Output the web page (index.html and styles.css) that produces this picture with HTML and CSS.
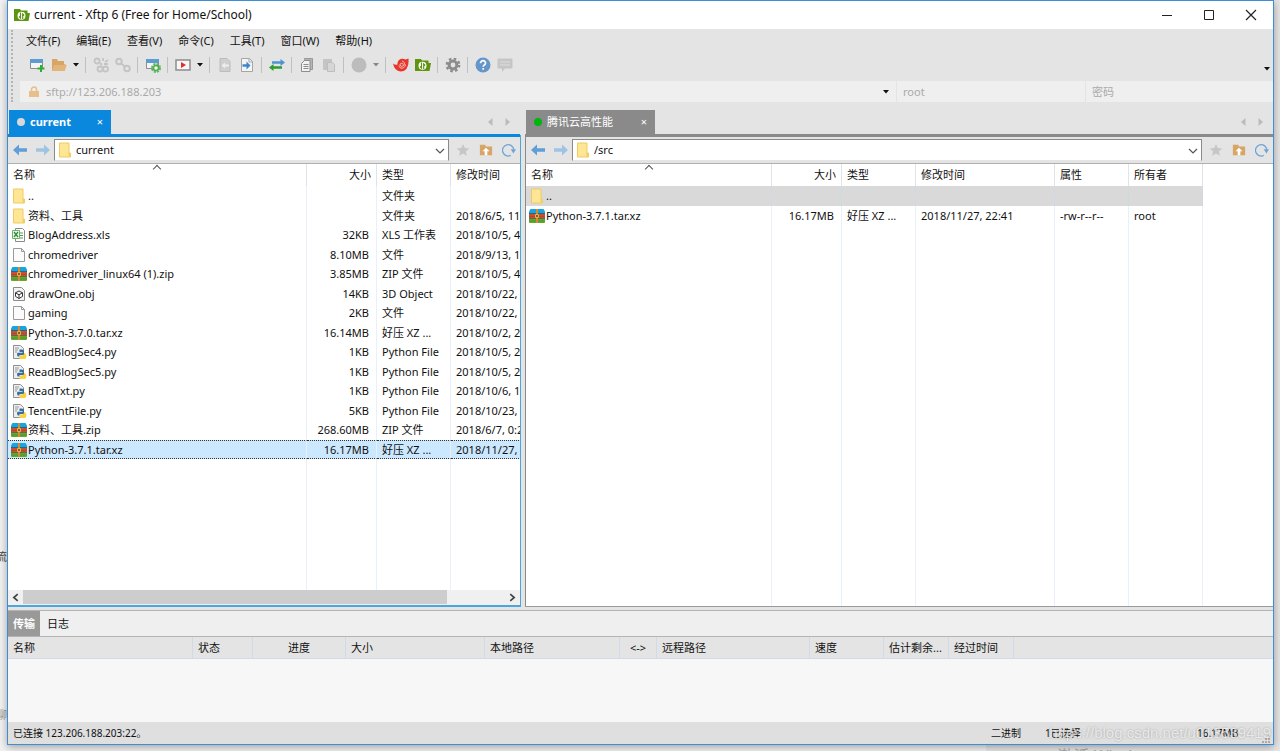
FILE: index.html
```html
<!DOCTYPE html>
<html lang="zh-CN">
<head>
    <meta charset="UTF-8">
    <meta name="viewport" content="width=device-width, initial-scale=1.0">
    <title>current - Xftp 6 (Free for Home/School)</title>
    <link rel="stylesheet" href="styles.css">
</head>
<body>
    <!-- icons used more than once -->
    <svg class="sprite" aria-hidden="true">
        <symbol id="i-xftp" viewBox="0 0 16 16">
            <path d="M0 2h6l1 1.500h6.500V6H16l-1.500 8H0z" fill="#5f9410"/>
            <circle cx="7.500" cy="8.800" r="4" fill="#fff"/>
            <path d="M6.500 5.500v5.500L5 9.500M8.700 12V7l1.500 1.500" fill="none" stroke="#5f9410" stroke-width="1.200"/>
        </symbol>
        <symbol id="i-folder" viewBox="0 0 16 16">
            <path d="M2.500 1h9.500v10h1.500v4h-11z" fill="#ffe694" stroke="#efcb62"/>
            <path d="M11.500 11h2v4h-2z" fill="#f5cf5c"/>
        </symbol>
        <symbol id="i-file" viewBox="0 0 16 16">
            <path d="M2.500 1.500h8l3 3v10h-11z" fill="#fbfbfb" stroke="#9a9a9a"/>
            <path d="M10.500 1.500v3h3" fill="none" stroke="#9a9a9a"/>
        </symbol>
        <symbol id="i-xls" viewBox="0 0 16 16">
            <path d="M4.500 1.500h7l2 2v11h-9z" fill="#fff" stroke="#8a8a8a"/>
            <path d="M9 6h3M9 8.500h3M9 11h3" stroke="#4e9a4e"/>
            <path d="M1.500 3.500h7v8h-7z" fill="#f1f8ee" stroke="#6bb06b"/>
            <path d="M3 5l4 5M7 5l-4 5" stroke="#2f8a36" stroke-width="1.300"/>
        </symbol>
        <symbol id="i-obj" viewBox="0 0 16 16">
            <path d="M2.500 1.500h8l3 3v10h-11z" fill="#f4f4f4" stroke="#8a8a8a"/>
            <path d="M8 5l3.500 1.800v3.600L8 12.500l-3.500-2.100V6.800zM4.500 6.800L8 8.800l3.500-2M8 8.800v3.700" fill="#fff" stroke="#333"/>
        </symbol>
        <symbol id="i-py" viewBox="0 0 16 16">
            <path d="M2.500 1.500h7l3 3v10h-10z" fill="#eee" stroke="#909090"/>
            <path d="M4 4h4M4 6h3M4 8h2" stroke="#999"/>
            <path d="M11 5.500H8.500V8h3v.7H7c-1.300 0-1.300 3.800.5 3.800h1V11h3.500l1-1.500V6.500z" fill="#37709f"/>
            <path d="M13 9v1.500l-1 1H9.500l-1 1v2.500h5c2.800 0 2.500-6-.5-6z" fill="#f9d33c"/>
        </symbol>
        <symbol id="i-zip" viewBox="0 0 16 16">
            <path d="M1.500 1h13L16 3.500V6H0V3.500z" fill="#18a5df"/>
            <path d="M0 6h16v4.500H0z" fill="#c9502f"/>
            <path d="M0 10.500h16V14q0 1-1 1H1q-1 0-1-1z" fill="#62a82d"/>
            <path d="M0 5.500h16M0 10.500h16" stroke="#3b3b3b" stroke-opacity=".6"/>
            <path d="M0 8.500h16M0 13h16" stroke="#333" stroke-opacity=".2"/>
            <path d="M7 1h2v14H7z" fill="#d18c35"/>
            <path d="M6.500 6.500h3v3h-3z" fill="#8a5a28" stroke="#e9b050"/>
        </symbol>
        <symbol id="i-left" viewBox="0 0 16 16">
            <path d="M1 8l6-5.500v3.700h8v3.600H7v3.700z" fill="currentColor"/>
        </symbol>
        <symbol id="i-right" viewBox="0 0 16 16">
            <path d="M15 8L9 2.500v3.700H1v3.600h8v3.700z" fill="currentColor"/>
        </symbol>
        <symbol id="i-star" viewBox="0 0 16 16">
            <path d="M8 1l2 4.800 5.200.4-4 3.400 1.300 5L8 11.900l-4.500 2.700 1.300-5-4-3.400L6 5.800z" fill="#c6c6c6"/>
        </symbol>
        <symbol id="i-up" viewBox="0 0 16 16">
            <path d="M1 2h6l1 2h7v10H1z" fill="#d9a566"/>
            <path d="M8 5.500l4 4H9.500V14h-3V9.500H4z" fill="#fff"/>
        </symbol>
        <symbol id="i-refresh" viewBox="0 0 16 16">
            <path d="M10 14.200A6.500 6.500 0 1 1 13.500 7.500" fill="none" stroke="#6ea5d8" stroke-width="1.500"/>
            <path d="M10 7h6l-3 5z" fill="#6ea5d8"/>
        </symbol>
        <symbol id="i-chevron" viewBox="0 0 16 16">
            <path d="M4 6l4 4 4-4" fill="none" stroke="#555" stroke-width="1.200"/>
        </symbol>
        <symbol id="i-caret" viewBox="0 0 6 4">
            <path d="M0 0h6L3 3.500z" fill="currentColor"/>
        </symbol>
        <symbol id="i-prev" viewBox="0 0 8 10">
            <path d="M6.500 1v8L2 5z" fill="#bbb"/>
        </symbol>
        <symbol id="i-next" viewBox="0 0 8 10">
            <path d="M1.500 1v8L6 5z" fill="#bbb"/>
        </symbol>
    </svg>

    <div class="desktop">
        <span class="behind behind-a">流程</span>
        <span class="behind behind-b">能聊</span>
        <span class="behind behind-c">激活 Windows</span>
    </div>

    <div class="window">
        <header class="titlebar">
            <svg class="icon"><use href="#i-xftp"/></svg>
            <h1>current - Xftp 6 (Free for Home/School)</h1>
            <div class="window-buttons">
                <button aria-label="最小化"><svg viewBox="0 0 12 12"><path d="M1 6.500h10" stroke="#222"/></svg></button>
                <button aria-label="最大化"><svg viewBox="0 0 12 12"><path d="M1.500 1.500h9v9h-9z" fill="none" stroke="#222"/></svg></button>
                <button aria-label="关闭"><svg viewBox="0 0 12 12"><path d="M1 1l10 10M11 1L1 11" stroke="#222" stroke-width="1.200"/></svg></button>
            </div>
        </header>

        <div class="bars">
            <nav class="menu">
                <button>文件(F)</button>
                <button>编辑(E)</button>
                <button>查看(V)</button>
                <button>命令(C)</button>
                <button>工具(T)</button>
                <button>窗口(W)</button>
                <button>帮助(H)</button>
            </nav>

            <div class="toolbar">
                <button class="tool" aria-label="新建"><svg class="icon" viewBox="0 0 16 16"><path d="M1.500 2.500h12v9h-12z" fill="#f4f4f4" stroke="#8c8c8c"/><path d="M1 2h13v4H1z" fill="#5d9bd3"/><path d="M12 8v7M8.500 11.500h7" stroke="#2fae35" stroke-width="2"/></svg></button>
                <button class="tool" aria-label="打开"><svg class="icon" viewBox="0 0 16 16"><path d="M1 2h5l1 2h6v3l2.500 1-2 6H1z" fill="#d9a566"/><path d="M3 8h12.500l-2 6H1z" fill="#e3b57b"/></svg></button>
                <button class="drop" aria-label="打开列表"><svg><use href="#i-caret"/></svg></button>
                <i class="sep"></i>
                <button class="tool" aria-label="重新连接"><svg class="icon" viewBox="0 0 16 16"><g fill="none" stroke="#c4c4c4" stroke-width="1.800"><circle cx="4" cy="4" r="2.500"/><circle cx="7" cy="12" r="2.500"/><circle cx="12.500" cy="12" r="2.500"/><path d="M7 6l2 2M10 1v3M12 5l3-2M11 7h4"/></g></svg></button>
                <button class="tool" aria-label="断开"><svg class="icon" viewBox="0 0 16 16"><g fill="none" stroke="#c4c4c4" stroke-width="2"><circle cx="4" cy="4.500" r="2.800"/><circle cx="12" cy="11.500" r="2.800"/><path d="M6 6.500l4 3"/></g></svg></button>
                <i class="sep"></i>
                <button class="tool" aria-label="属性"><svg class="icon" viewBox="0 0 16 16"><path d="M1.500 2.500h12v9h-12z" fill="#f4f4f4" stroke="#8c8c8c"/><path d="M1 2h13v4H1z" fill="#5d9bd3"/><circle cx="11" cy="11" r="4" fill="none" stroke="#5cb85c" stroke-width="2" stroke-dasharray="2 1.140"/><circle cx="11" cy="11" r="2.500" fill="#fff" stroke="#4bae4b" stroke-width="1.500"/></svg></button>
                <i class="sep"></i>
                <button class="tool" aria-label="运行"><svg class="icon" viewBox="0 0 16 16"><path d="M1 3h14v10H1z" fill="#f7f7f7" stroke="#8d8d8d" stroke-width="1.500"/><path d="M6 5l5 3-5 3z" fill="#e02d2d"/></svg></button>
                <button class="drop" aria-label="运行列表"><svg><use href="#i-caret"/></svg></button>
                <i class="sep"></i>
                <button class="tool" aria-label="传输到左侧"><svg class="icon" viewBox="0 0 16 16"><path d="M3 1.500h7l3 3v10H3z" fill="#cfcfcf" stroke="#bcbcbc"/><path d="M4.500 8.500l3.500-3v2h4v2H8v2z" fill="#eee"/></svg></button>
                <button class="tool" aria-label="传输到右侧"><svg class="icon" viewBox="0 0 16 16"><path d="M2.500 1.500h8l3 3v10h-11z" fill="#f4f4f4" stroke="#a5a5a5"/><path d="M10 1.500v3.500h3.500" fill="none" stroke="#a5a5a5"/><path d="M11.500 8.500L7.500 4.500v2.800H3.500v2.400h4v2.800z" fill="#3d86cf"/></svg></button>
                <i class="sep"></i>
                <button class="tool" aria-label="同步"><svg class="icon" viewBox="0 0 16 16"><path d="M16 5.500l-4.500-3.500v2.300H3v2.400h8.500V9z" fill="#4e93d2"/><path d="M0 10.500L4.500 7v2.300H13v2.400H4.500V14z" fill="#2d9d2d"/></svg></button>
                <i class="sep"></i>
                <button class="tool" aria-label="复制"><svg class="icon" viewBox="0 0 16 16"><path d="M5.500 1.500h8v11h-8z" fill="#b5b5b5" stroke="#999"/><path d="M2.500 6.500l3-3H11v11H2.500z" fill="#f2f2f2" stroke="#8c8c8c"/><path d="M4.500 7.500h5M4.500 9.500h5M4.500 11.500h5" stroke="#8c8c8c"/></svg></button>
                <button class="tool" aria-label="粘贴"><svg class="icon" viewBox="0 0 16 16"><path d="M2 2h9v11H2z" fill="#c4c4c4"/><path d="M6.500 5.500h5l2 2v7h-7z" fill="#d6d6d6" stroke="#bdbdbd"/></svg></button>
                <i class="sep"></i>
                <button class="tool" aria-label="停止"><svg class="icon" viewBox="0 0 16 16"><circle cx="8" cy="8" r="7.500" fill="#bcbcbc"/></svg></button>
                <button class="drop dim" aria-label="停止列表"><svg><use href="#i-caret"/></svg></button>
                <i class="sep"></i>
                <button class="tool" aria-label="Xshell"><svg class="icon" viewBox="0 0 16 16"><path d="M0 6.500Q2.500 8.500 4.500 7.500C4 2.500 9 .5 12.500 2.500L15.500 1.500Q16.500 14 7.500 14.500 1.500 14 0 6.500z" fill="#e8362d"/><path d="M10 7.500a1.500 1.500 0 1 0-1.500 1.800c3.500 0 4-4.800.5-5.100M6 8.500c.5 4 6 3.500 6.500-1" fill="none" stroke="#f3d2cf" stroke-width=".9"/></svg></button>
                <button class="tool" aria-label="Xftp"><svg class="icon"><use href="#i-xftp"/></svg></button>
                <i class="sep"></i>
                <button class="tool" aria-label="选项"><svg class="icon" viewBox="0 0 16 16"><circle cx="8" cy="8" r="6.200" fill="none" stroke="#8c8c8c" stroke-width="2.400" stroke-dasharray="2.500 2.369"/><circle cx="8" cy="8" r="3.900" fill="none" stroke="#8c8c8c" stroke-width="3"/></svg></button>
                <i class="sep"></i>
                <button class="tool" aria-label="帮助"><svg class="icon" viewBox="0 0 16 16"><circle cx="8" cy="8" r="7.500" fill="#6496ca"/><path d="M5.500 6.300c0-3.600 5.200-3.300 5 0-.1 1.600-2.300 1.700-2.300 3.500M8.200 11v1.800" fill="none" stroke="#fff" stroke-width="1.700"/></svg></button>
                <button class="tool" aria-label="反馈"><svg class="icon" viewBox="0 0 16 16"><path d="M1.500 1.500h13q1 0 1 1v8q0 1-1 1H8L5 15v-3.500H1.500q-1 0-1-1v-8q0-1 1-1z" fill="#c6c6c6"/><path d="M3 5h10M3 8h10" stroke="#dedede"/></svg></button>
                <button class="drop more" aria-label="更多"><svg><use href="#i-caret"/></svg></button>
            </div>

            <form class="address">
                <div class="host">
                    <svg class="lock" viewBox="0 0 10 12"><path d="M2.500 6V3.500a2.500 2.500 0 0 1 5 0V6" fill="none" stroke="#e6bf8c" stroke-width="1.500"/><path d="M0 5h10v6H0z" fill="#e6bf8c"/></svg>
                    <input type="text" placeholder="sftp://123.206.188.203" aria-label="主机">
                    <button type="button" class="drop" aria-label="历史"><svg><use href="#i-caret"/></svg></button>
                </div>
                <input class="user" type="text" placeholder="root" aria-label="用户名">
                <input class="pass" type="password" placeholder="密码" aria-label="密码">
            </form>
        </div>

        <main class="panes">
            <section class="pane local">
                <div class="tabs">
                    <button class="tab"><i class="dot"></i><b>current</b><span class="close">×</span></button>
                    <button class="scroll" aria-label="上一个"><svg><use href="#i-prev"/></svg></button>
                    <button class="scroll" aria-label="下一个"><svg><use href="#i-next"/></svg></button>
                </div>
                <div class="pathbar">
                    <button class="nav" aria-label="后退"><svg class="icon"><use href="#i-left"/></svg></button>
                    <button class="nav forward" aria-label="前进"><svg class="icon"><use href="#i-right"/></svg></button>
                    <div class="path">
                        <svg class="icon"><use href="#i-folder"/></svg>
                        <select aria-label="本地路径"><option>current</option></select>
                        <svg class="icon chevron"><use href="#i-chevron"/></svg>
                    </div>
                    <button class="nav" aria-label="收藏"><svg class="small"><use href="#i-star"/></svg></button>
                    <button class="nav" aria-label="上级"><svg class="small"><use href="#i-up"/></svg></button>
                    <button class="nav" aria-label="刷新"><svg class="small"><use href="#i-refresh"/></svg></button>
                </div>
                <div class="list">
                    <table class="files">
                        <colgroup><col class="w-name"><col class="w-size"><col class="w-type"><col class="w-date"></colgroup>
                        <thead>
                            <tr><th class="sorted">名称</th><th class="num">大小</th><th>类型</th><th>修改时间</th></tr>
                        </thead>
                        <tbody>
                            <tr><td><svg class="icon"><use href="#i-folder"/></svg>..</td><td class="num"></td><td>文件夹</td><td></td></tr>
                            <tr><td><svg class="icon"><use href="#i-folder"/></svg>资料、工具</td><td class="num"></td><td>文件夹</td><td>2018/6/5, 11:20</td></tr>
                            <tr><td><svg class="icon"><use href="#i-xls"/></svg>BlogAddress.xls</td><td class="num">32KB</td><td>XLS 工作表</td><td>2018/10/5, 4:12</td></tr>
                            <tr><td><svg class="icon"><use href="#i-file"/></svg>chromedriver</td><td class="num">8.10MB</td><td>文件</td><td>2018/9/13, 10:41</td></tr>
                            <tr><td><svg class="icon"><use href="#i-zip"/></svg>chromedriver_linux64 (1).zip</td><td class="num">3.85MB</td><td>ZIP 文件</td><td>2018/10/5, 4:08</td></tr>
                            <tr><td><svg class="icon"><use href="#i-obj"/></svg>drawOne.obj</td><td class="num">14KB</td><td>3D Object</td><td>2018/10/22, 9:30</td></tr>
                            <tr><td><svg class="icon"><use href="#i-file"/></svg>gaming</td><td class="num">2KB</td><td>文件</td><td>2018/10/22, 9:31</td></tr>
                            <tr><td><svg class="icon"><use href="#i-zip"/></svg>Python-3.7.0.tar.xz</td><td class="num">16.14MB</td><td>好压 XZ ...</td><td>2018/10/2, 22:15</td></tr>
                            <tr><td><svg class="icon"><use href="#i-py"/></svg>ReadBlogSec4.py</td><td class="num">1KB</td><td>Python File</td><td>2018/10/5, 21:02</td></tr>
                            <tr><td><svg class="icon"><use href="#i-py"/></svg>ReadBlogSec5.py</td><td class="num">1KB</td><td>Python File</td><td>2018/10/5, 22:36</td></tr>
                            <tr><td><svg class="icon"><use href="#i-py"/></svg>ReadTxt.py</td><td class="num">1KB</td><td>Python File</td><td>2018/10/6, 11:05</td></tr>
                            <tr><td><svg class="icon"><use href="#i-py"/></svg>TencentFile.py</td><td class="num">5KB</td><td>Python File</td><td>2018/10/23, 8:50</td></tr>
                            <tr><td><svg class="icon"><use href="#i-zip"/></svg>资料、工具.zip</td><td class="num">268.60MB</td><td>ZIP 文件</td><td>2018/6/7, 0:24</td></tr>
                            <tr class="selected"><td><svg class="icon"><use href="#i-zip"/></svg>Python-3.7.1.tar.xz</td><td class="num">16.17MB</td><td>好压 XZ ...</td><td>2018/11/27, 22:30</td></tr>
                            <tr class="rest"><td></td><td></td><td></td><td></td></tr>
                        </tbody>
                    </table>
                </div>
                <div class="hscroll">
                    <button aria-label="向左"><svg viewBox="0 0 8 8"><path d="M6 1L2.500 4 6 7" fill="none" stroke="#444" stroke-width="1.500"/></svg></button>
                    <div class="track"><div class="thumb"></div></div>
                    <button aria-label="向右"><svg viewBox="0 0 8 8"><path d="M2 1l3.500 3L2 7" fill="none" stroke="#444" stroke-width="1.500"/></svg></button>
                </div>
            </section>

            <section class="pane remote">
                <div class="tabs">
                    <button class="tab"><i class="dot"></i><span>腾讯云高性能</span><span class="close">×</span></button>
                    <button class="scroll" aria-label="上一个"><svg><use href="#i-prev"/></svg></button>
                    <button class="scroll" aria-label="下一个"><svg><use href="#i-next"/></svg></button>
                </div>
                <div class="pathbar">
                    <button class="nav" aria-label="后退"><svg class="icon"><use href="#i-left"/></svg></button>
                    <button class="nav forward" aria-label="前进"><svg class="icon"><use href="#i-right"/></svg></button>
                    <div class="path">
                        <svg class="icon"><use href="#i-folder"/></svg>
                        <select aria-label="远程路径"><option>/src</option></select>
                        <svg class="icon chevron"><use href="#i-chevron"/></svg>
                    </div>
                    <button class="nav" aria-label="收藏"><svg class="small"><use href="#i-star"/></svg></button>
                    <button class="nav" aria-label="上级"><svg class="small"><use href="#i-up"/></svg></button>
                    <button class="nav" aria-label="刷新"><svg class="small"><use href="#i-refresh"/></svg></button>
                </div>
                <div class="list">
                    <table class="files">
                        <colgroup><col class="w-rname"><col class="w-size"><col class="w-type"><col class="w-rdate"><col class="w-type"><col class="w-type"></colgroup>
                        <thead>
                            <tr><th class="sorted">名称</th><th class="num">大小</th><th>类型</th><th>修改时间</th><th>属性</th><th>所有者</th></tr>
                        </thead>
                        <tbody>
                            <tr class="parent"><td><svg class="icon"><use href="#i-folder"/></svg>..</td><td></td><td></td><td></td><td></td><td></td></tr>
                            <tr><td><svg class="icon"><use href="#i-zip"/></svg>Python-3.7.1.tar.xz</td><td class="num">16.17MB</td><td>好压 XZ ...</td><td>2018/11/27, 22:41</td><td>-rw-r--r--</td><td>root</td></tr>
                            <tr class="rest"><td></td><td></td><td></td><td></td><td></td><td></td></tr>
                        </tbody>
                    </table>
                </div>
            </section>
        </main>

        <section class="transfer">
            <div class="transfer-tabs">
                <button class="active">传输</button>
                <button>日志</button>
            </div>
            <table class="queue">
                <colgroup><col class="q-name"><col class="q-state"><col class="q-prog"><col class="q-size"><col class="q-local"><col class="q-dir"><col class="q-remote"><col class="q-speed"><col class="q-time"><col class="q-time"><col></colgroup>
                <thead>
                    <tr><th>名称</th><th>状态</th><th class="mid">进度</th><th>大小</th><th>本地路径</th><th class="mid">&lt;-&gt;</th><th>远程路径</th><th>速度</th><th>估计剩余...</th><th>经过时间</th><th></th></tr>
                </thead>
            </table>
        </section>

        <footer class="status">
            <span class="connected">已连接 123.206.188.203:22。</span>
            <span class="mode">二进制</span>
            <span class="count">1已选择</span>
            <span class="total">16.17MB</span>
            <svg class="grip" viewBox="0 0 10 10"><path d="M8 2h2M5 5h2M8 5h2M2 8h2M5 8h2M8 8h2" stroke="#aaa" stroke-width="2"/></svg>
            <span class="watermark">https://blog.csdn.net/u013539419</span>
        </footer>
    </div>
</body>
</html>
```
FILE: styles.css
```css
* {
    box-sizing: border-box;
}

body {
    margin: 0;
    height: 100vh;
    padding: 0 6px 6px 7px;
    background-color: #e6e6e6;
    color: #111;
    font: 11px/18px "Noto Sans", "Noto Sans CJK SC", sans-serif;
    overflow: hidden;
}

button, input, select {
    margin: 0;
    padding: 0;
    border: 0;
    background: none;
    color: inherit;
    font: inherit;
}

svg {
    display: block;
    flex: none;
}

.sprite {
    position: absolute;
    width: 0;
    height: 0;
}

.icon {
    width: 16px;
    height: 16px;
}

.small {
    width: 14px;
    height: 14px;
}

/* what shows past the window's edges */
.desktop {
    position: absolute;
    inset: 0;
    overflow: hidden;
    background: linear-gradient(to right, #f2f2f2 77%, #e6e6e6 77%);
}

.behind {
    position: absolute;
    white-space: nowrap;
}

.behind-a {
    left: -4px;
    bottom: 185px;
    color: #444;
}

.behind-b {
    left: -15px;
    bottom: 27px;
    color: #999;
}

.behind-c {
    right: 118px;
    bottom: -14px;
    color: #aaa;
    font-size: 16px;
}

.window {
    position: relative;
    display: flex;
    flex-direction: column;
    height: 100%;
    border: 1px solid #3c8fd6;
    background-color: #e4e4e4;
    box-shadow: 0 2px 8px rgba(0, 0, 0, 0.35);
}

.titlebar {
    display: flex;
    align-items: center;
    gap: 4px;
    height: 28px;
    padding-left: 6px;
    background-color: #fff;
}

.titlebar h1 {
    flex: 1;
    margin: 0;
    font-size: 12px;
    font-weight: normal;
}

.window-buttons {
    display: flex;
    margin-right: 1px;
}

.window-buttons button {
    width: 42px;
    height: 28px;
}

.window-buttons svg {
    width: 12px;
    height: 12px;
    margin: 0 auto;
}

/* menu, toolbar, address */
.bars {
    margin: 1px 0 0 3px;
    border-left: 2px dotted #b4b4b4;
}

.menu {
    display: flex;
    gap: 16px;
    height: 22px;
    padding-left: 13px;
}

.toolbar {
    display: flex;
    align-items: center;
    height: 29px;
    padding: 0 0 4px 13px;
}

.tool {
    width: 22px;
    height: 22px;
    padding: 3px;
}

.drop {
    width: 12px;
    height: 16px;
}

.drop svg {
    width: 6px;
    height: 4px;
    margin: 0 auto;
}

.dim {
    color: #888;
}

.more {
    margin-left: auto;
    align-self: flex-end;
}

.sep {
    width: 1px;
    height: 16px;
    margin: 0 4px 0 3px;
    background-color: #c0c0c0;
}

.address {
    display: grid;
    grid-template-columns: 876fr 188fr 187fr;
    gap: 1px;
    height: 21px;
    margin-left: 7px;
}

.address input {
    min-width: 0;
}

.address input::placeholder {
    color: #aaa;
    opacity: 1;
}

.host, .user, .pass {
    background-color: #efefef;
}

.host {
    display: flex;
    align-items: center;
    padding: 0 4px 0 9px;
}

.host input {
    flex: 1;
    margin-left: 7px;
}

.lock {
    width: 10px;
    height: 12px;
}

.user, .pass {
    padding: 0 6px;
}

/* panes */
.panes {
    flex: 1;
    display: grid;
    grid-template-columns: 513fr 748fr;
    gap: 4px;
    min-height: 0;
    margin-top: 8px;
}

.pane {
    display: flex;
    flex-direction: column;
    min-width: 0;
    min-height: 0;
    border-bottom: 1px solid #9a9a9a;
}

.local {
    padding-right: 1px;
    border-bottom: 2px solid #4ba6de;
    background: linear-gradient(#4ba6de, #4ba6de) right 25px / 1px 100% no-repeat;
}

.tabs {
    display: flex;
    height: 27px;
    border-bottom: 3px solid #0a88de;
}

.remote .tabs {
    border-color: #8a8a8a;
}

.tab {
    display: flex;
    align-items: center;
    width: 102px;
    margin: 0 auto 0 1px;
    padding: 0 8px;
    background-color: #0a88de;
    color: #fff;
}

.remote .tab {
    width: 129px;
    background-color: #8a8a8a;
}

.dot {
    width: 8px;
    height: 8px;
    margin-right: 5px;
    border-radius: 50%;
    background-color: #d8d8d8;
}

.remote .dot {
    background-color: #00b50f;
}

.close {
    margin-left: auto;
}

.scroll {
    width: 18px;
}

.scroll svg {
    width: 8px;
    height: 10px;
    margin: 0 auto;
}

.tabs .scroll:last-child {
    margin-right: 3px;
}

.pathbar {
    display: flex;
    align-items: center;
    height: 27px;
    border-bottom: 1px solid #b0b0b0;
}

.nav {
    width: 23px;
    height: 24px;
    color: #5f9ed6;
}

.nav svg {
    margin: 0 auto;
}

.forward {
    color: #9fc3e3;
}

.path {
    position: relative;
    flex: 1;
    display: flex;
    align-items: center;
    height: 22px;
    margin-right: 2px;
    padding-left: 2px;
    border: 1px solid #8a8a8a;
    border-bottom-color: #e4e4e4;
    background-color: #fff;
}

.path select {
    flex: 1;
    height: 20px;
    padding-left: 3px;
    appearance: none;
}

.chevron {
    position: absolute;
    right: 0;
    top: 3px;
    pointer-events: none;
}

.list {
    flex: 1;
    min-height: 0;
    overflow: hidden;
    background-color: #fff;
}

.remote .list, .remote .pathbar {
    border-left: 1px solid #8a8a8a;
}

.files, .queue {
    table-layout: fixed;
    border-collapse: separate;
    border-spacing: 0;
}

.files {
    width: 0;
    height: 100%;
}

.w-name { width: 299px; }
.w-rname { width: 246px; }
.w-size { width: 70px; }
.w-type { width: 74px; }
.w-date { width: 112px; }
.w-rdate { width: 139px; }

.files th, .queue th {
    padding: 0 5px;
    font-weight: normal;
    text-align: left;
    white-space: nowrap;
}

.files th {
    position: relative;
    height: 22px;
    border-right: 1px solid #e0e4e8;
}

/* sort arrow over the name column */
.sorted::before {
    content: "";
    position: absolute;
    top: 2px;
    left: 49%;
    width: 5px;
    height: 5px;
    border: solid #555;
    border-width: 1px 0 0 1px;
    transform: rotate(45deg);
}

.files td {
    height: 20px;
    padding: 0 5px;
    border-right: 1px solid #e8f1fa;
    line-height: 18px;
    white-space: nowrap;
    overflow: hidden;
}

.files tbody tr:nth-child(even) td {
    height: 19px;
}

.files tbody .rest td {
    height: auto;
}

.files td:first-child {
    padding-left: 3px;
}

.files td .icon {
    float: left;
    margin: 1px 1px 0 0;
}

.files .num {
    text-align: right;
}

.files td.num {
    padding-right: 7px;
}

.selected td {
    border-top: 1px dotted #333;
    border-bottom: 1px dotted #333;
    background-color: #cce8ff;
    line-height: 17px;
}

.parent td {
    border-color: #d0d8e0;
    background-color: #d9d9d9;
}

.hscroll {
    display: flex;
    height: 15px;
    background-color: #f0f0f0;
}

.hscroll button {
    width: 15px;
}

.hscroll svg {
    width: 9px;
    height: 9px;
    margin: 0 auto;
}

.track {
    flex: 1;
}

.thumb {
    width: 88%;
    height: 14px;
    background-color: #cdcdcd;
}

/* transfer queue */
.transfer {
    height: 112px;
    margin-top: 3px;
    border-top: 1px solid #b4b4b4;
    background-color: #f7f7f7;
}

.transfer-tabs {
    display: flex;
    height: 26px;
    border-bottom: 1px solid #b4b4b4;
    background-color: #efefef;
}

.transfer-tabs button {
    padding: 0 7px;
}

.transfer-tabs .active {
    padding: 0 5px;
    background-color: #999;
    color: #fff;
    font-weight: bold;
}

.queue {
    width: 100%;
}

.queue th {
    height: 22px;
    border-right: 1px solid #cfdbea;
    border-bottom: 1px solid #cfdbea;
    background-color: #e4e4e4;
}

.queue th:last-child {
    border-right: 0;
}

.queue .mid {
    text-align: center;
}

.q-name { width: 185px; }
.q-state { width: 60px; }
.q-prog { width: 93px; }
.q-size { width: 139px; }
.q-local { width: 135px; }
.q-dir { width: 37px; }
.q-remote { width: 153px; }
.q-speed { width: 74px; }
.q-time { width: 65px; }

.status {
    position: relative;
    display: flex;
    align-items: center;
    height: 22px;
    padding: 0 3px 0 5px;
    background-color: #dfdfdf;
    font-size: 10px;
}

.connected {
    flex: 1;
}

.mode {
    width: 54px;
}

.count {
    width: 152px;
}

.total {
    width: 63px;
}

.grip {
    width: 10px;
    height: 10px;
    align-self: flex-end;
}

.watermark {
    position: absolute;
    right: 2px;
    color: rgba(255, 255, 255, 0.7);
    font: 15px/20px "Liberation Sans", sans-serif;
    text-shadow: 0 0 2px rgba(0, 0, 0, 0.3);
}
```
